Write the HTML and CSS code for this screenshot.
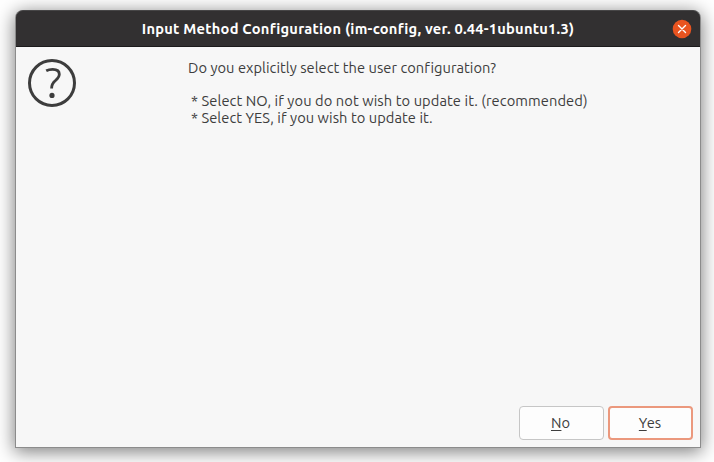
FILE: index.html
```html
<!DOCTYPE html>
<html lang="en">
<head>
<meta charset="utf-8">
<title>Input Method Configuration</title>
<link rel="stylesheet" href="styles.css">
</head>
<body>
<main class="window">
  <header class="titlebar">
    <span class="spacer"></span>
    <h1 class="title"><span class="t-title">Input Method Configuration (im-config, ver. 0.44-1ubuntu1.3)</span></h1>
    <button class="close" aria-label="Close">
      <svg width="20" height="20" viewBox="0 0 20 20"><circle cx="10" cy="10" r="9.3" fill="#e95420"/><path d="M6.5 6.5l7 7M13.5 6.5l-7 7" stroke="#fff" stroke-width="1.4" stroke-linecap="round"/></svg>
    </button>
  </header>
  <section class="content">
    <svg class="icon" width="48" height="48" viewBox="0 0 48 48" fill="none" stroke="#3d3d3d">
      <circle cx="24" cy="24" r="22.5" stroke-width="3"/>
      <path d="M18.2 11.8C20.2 10.7 22 10.3 24.7 10.3C29 10.3 31.3 12.2 31.3 15.3C31.3 18.2 29.4 19.8 27.2 21.8C24.6 24 23.6 25.7 23.6 29.4" stroke-width="2.8"/>
      <circle cx="24" cy="36.4" r="2.6" fill="#3d3d3d" stroke="none"/>
    </svg>
    <div class="message">
      <p class="question"><span class="t-question">Do you explicitly select the user configuration?</span></p>
      <p class="option"><span class="t-no">* Select NO, if you do not wish to update it. (recommended)</span></p>
      <p class="option"><span class="t-yes">* Select YES, if you wish to update it.</span></p>
    </div>
  </section>
  <footer class="actions">
    <button class="btn"><span><u>N</u>o</span></button>
    <button class="btn primary"><span><u>Y</u>es</span></button>
  </footer>
</main>
</body>
</html>
```
FILE: styles.css
```css
* { box-sizing: border-box; }
body {
  margin: 0;
  height: 462px;
  padding: 10px 13px 14px 15px;
  overflow: hidden;
  background: #fff;
  color: #3d3d3d;
  font: 14.667px/17px Ubuntu, "Noto Sans", sans-serif;
}
.window {
  display: flex;
  flex-direction: column;
  width: 686px;
  height: 438px;
  border: 1px solid #8c8c8c;
  border-top: 0;
  border-radius: 8px 8px 0 0;
  background: #f7f7f7;
  box-shadow: 0 3px 18px 1px rgba(0, 0, 0, .5);
}
.titlebar {
  display: flex;
  align-items: center;
  height: 37px;
  padding: 0 8px;
  border-top: 1px solid #474647;
  border-bottom: 1px solid #1c1b1c;
  border-radius: 7px 7px 0 0;
  background: #323031;
}
.spacer { width: 20px; }
.title {
  flex: 1;
  margin: 0;
  color: #fff;
  font-size: 14.667px;
  font-weight: 700;
  text-align: center;
  white-space: nowrap;
}
.close { width: 20px; height: 20px; padding: 0; border: 0; background: none; }
.close svg { display: block; }
.content { display: flex; flex: 1; padding: 12px; }
.icon { flex: none; }
.message { padding-left: 112px; white-space: nowrap; }
.message p { margin: 0; }
.message .question { margin-bottom: 16px; }
.option { padding-left: 3px; }
.t-title { letter-spacing: .23px; }
.t-question { letter-spacing: .04px; }
.t-no { letter-spacing: .09px; }
.t-yes { letter-spacing: .06px; }
.actions { display: flex; justify-content: flex-end; gap: 4px; padding: 0 7px 7px; }
.btn {
  width: 85px;
  height: 34px;
  padding: 0 2px 2px 0;
  border: 1px solid #c6c6c6;
  border-radius: 4px;
  background: #fdfdfd;
  color: #3d3d3d;
  font: inherit;
}
.btn u { text-decoration-thickness: 1px; text-underline-offset: 2px; }
.primary { padding-right: 1px; border: 2px solid #eb987d; }
```
